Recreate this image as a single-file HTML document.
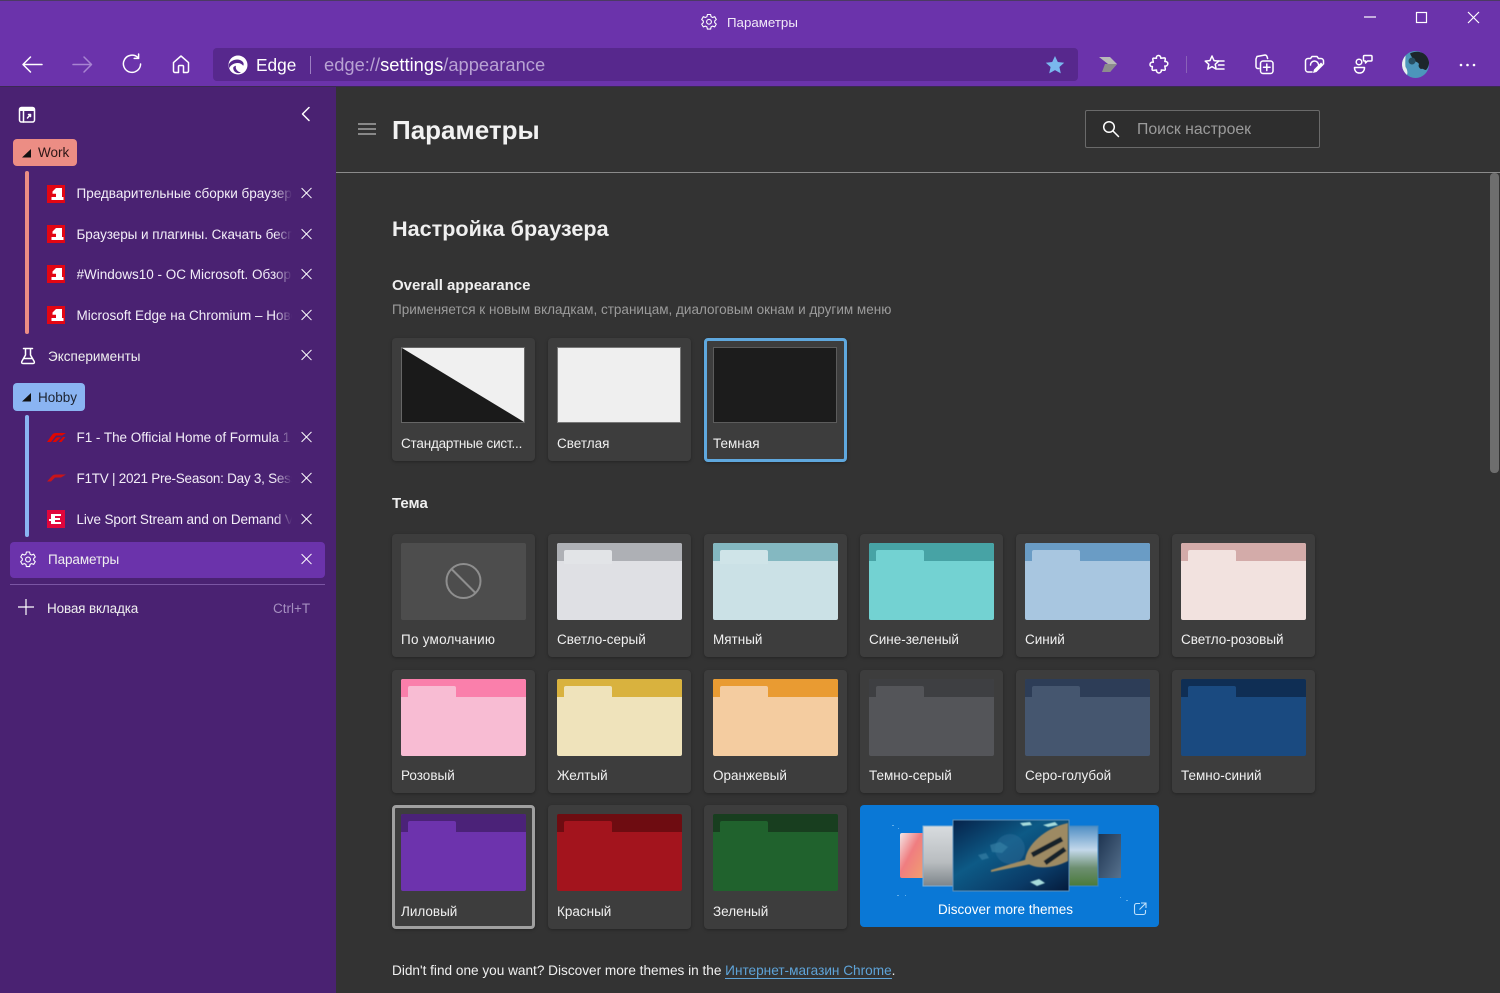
<!DOCTYPE html>
<html lang="ru"><head><meta charset="utf-8"><title>Параметры</title>
<style>
*{box-sizing:border-box}
html,body{margin:0;width:1500px;height:993px;overflow:hidden;background:#333;font-family:"Liberation Sans","Noto Sans CJK SC",sans-serif;color:#f0f0f0}
.a{position:absolute}
.t{position:absolute;white-space:nowrap;line-height:20px;font-size:13.5px}
svg{position:absolute;overflow:visible}
.s{fill:none;stroke:#fff;stroke-width:1.5;stroke-linecap:round;stroke-linejoin:round}
.tab{position:absolute;left:76.5px;width:215px;overflow:hidden;white-space:nowrap;line-height:20px;font-size:13.5px;color:#f3eef8;-webkit-mask-image:linear-gradient(90deg,#000 92%,transparent);mask-image:linear-gradient(90deg,#000 92%,transparent)}
.x{position:absolute;left:301px;width:12px;height:12px}
.x:before,.x:after{content:"";position:absolute;left:5px;top:-1px;width:1.3px;height:14px;background:#fff}
.x:before{transform:rotate(45deg)}.x:after{transform:rotate(-45deg)}
.c{position:absolute;width:143px;height:123px;background:#3d3d3d;border-radius:4px;box-shadow:0 1px 3px rgba(0,0,0,.3)}
.c .l{position:absolute;left:9px;top:96px;line-height:20px;font-size:13.5px;color:#f0f0f0;white-space:nowrap}
.f{position:absolute;left:9px;top:9px;width:124.5px;height:77px;border-radius:2px;overflow:hidden}
.f b{position:absolute;left:0;right:0;top:0;height:18px}
.f u{position:absolute;left:7px;top:7px;width:48px;height:14px;border-radius:2px 2px 0 0}
.p{position:absolute;left:9px;top:9px;width:124px;height:76px;border:1px solid #5c5c5c}
</style></head><body>

<!-- title / toolbar -->
<div class="a" style="left:0;top:0;width:1500px;height:86px;background:#6b33ab;border-top:1px solid #4b3a63"></div>
<div class="a" style="left:0;top:86px;width:1500px;height:1px;background:#3b2a52"></div>
<svg style="left:700px;top:13px" width="18" height="18" viewBox="0 0 18 18"><path class="s" style="stroke-width:1.1" d="M7.4 1.5h3.2l.5 2.2 1.5.8 2.1-.8 1.600 2.800-1.600 1.500v1.600l1.600 1.500-1.600 2.800-2.100-.8-1.500.8-.5 2.200H7.400l-.5-2.200-1.500-.8-2.100.8-1.600-2.800 1.600-1.500V8l-1.600-1.500 1.600-2.800 2.100.8 1.500-.8z"/><circle class="s" style="stroke-width:1.1" cx="9" cy="8.800" r="2.400"/></svg>
<div class="t" style="left:727px;top:13px;font-size:13.300px;color:#f1e9f8">Параметры</div>

<svg style="left:1364px;top:10px" width="120" height="16" viewBox="0 0 120 16"><path d="M0 7h12" stroke="#fff" stroke-width="1.2"/><rect x="52.500" y="2.500" width="10" height="10" fill="none" stroke="#fff" stroke-width="1.2"/><path d="M104 2l11 11M115 2l-11 11" stroke="#fff" stroke-width="1.2"/></svg>

<svg style="left:20px;top:52px" width="24" height="24" viewBox="0 0 24 24"><path class="s" d="M22 12.500H3M10.500 5l-7.500 7.500 7.500 7.500"/></svg>
<svg style="left:70px;top:52px" width="24" height="24" viewBox="0 0 24 24"><path class="s" style="stroke:#a884d2" d="M3 12.500h18M14 5l7.500 7.500-7.500 7.500"/></svg>
<svg style="left:120px;top:52px" width="24" height="24" viewBox="0 0 24 24"><path class="s" d="M18 5.600A8.600 8.600 0 1 0 20.600 12M18.600 2v4.400h-4.400"/></svg>
<svg style="left:170px;top:53px" width="22" height="22" viewBox="0 0 22 22"><path class="s" d="M11 3L3.500 9.600v8.400a1.500 1.500 0 0 0 1.500 1.500h3.500v-6a1 1 0 0 1 1-1h3a1 1 0 0 1 1 1v6H17a1.500 1.500 0 0 0 1.500-1.500V9.600z"/></svg>

<div class="a" style="left:213px;top:48px;width:865px;height:33px;background:#57288d;border-radius:4px"></div>
<svg style="left:228px;top:55px" width="20" height="20" viewBox="0 0 20 20"><circle cx="10" cy="10" r="9.500" fill="#fff"/><path d="M.8 9.500C2.500 5.500 8 3.500 12 5c3 1.200 4.500 3.500 3.200 5.800C14 9 12 8 9.500 8 6 8 2.500 10 1 13.500z" fill="#57288d"/><path d="M8 10.800c-1 3.200 1.500 6 5 6.800-3.800 1.600-8-.8-7.800-5 .5-1 1.500-1.600 2.800-1.800z" fill="#57288d"/></svg>
<div class="t" style="left:256px;top:54px;font-size:17.300px;line-height:22px;color:#fff">Edge</div>
<div class="a" style="left:310px;top:56px;width:1px;height:18px;background:#9d7fc2"></div>
<div class="t" style="left:324px;top:54px;font-size:18.330px;line-height:22px;color:#b8a2d3">edge://<span style="color:#fff">settings</span>/appearance</div>
<svg style="left:1045px;top:55px" width="20" height="20" viewBox="0 0 20 20"><path d="M10 1l2.800 6 6.400.7-4.800 4.300 1.400 6.400L10 15.100 4.200 18.400l1.400-6.400L.8 7.700 7.200 7z" fill="#7ab8ee"/></svg>

<svg style="left:1099px;top:56px" width="20" height="18" viewBox="0 0 20 18"><path d="M0 1h11l7 7-7 8H3l6-8z" fill="#b9b9b9"/><path d="M6 8h6l6 0-7 8H3z" fill="#8d8d8d"/></svg>
<svg style="left:1149px;top:54px" width="20" height="20" viewBox="0 0 20 20"><path class="s" d="M7.500 4.200C7 2.500 8.200 1.200 9.800 1.500c1.500.3 2 1.500 2 2.700l3.500-.3c.8 0 1.200.5 1 1.300l-.5 2.300c1.500-.3 3 .6 3 2.200s-1.500 2.700-3 2.300l.5 3c.1.800-.4 1.300-1.100 1.300l-2.900-.3c.3 1.500-.8 3-2.400 3s-2.700-1.500-2.400-3l-3.200.4c-.8.100-1.300-.4-1.200-1.200l.3-2.700C1.800 12.800.8 11.600 1 10.200c.2-1.400 1.500-2.300 3.300-2L3.800 5.300c-.1-.8.300-1.300 1.100-1.200z"/></svg>
<div class="a" style="left:1186px;top:56px;width:1px;height:17px;background:#8a62b8"></div>
<svg style="left:1204px;top:54px" width="22" height="20" viewBox="0 0 22 20"><path class="s" d="M8 2l2 4.600 4.800.5-3.600 3.200 1 4.800L8 12.600 3.800 15.100l1-4.800L1.200 7.100 6 6.600z"/><path class="s" d="M14 7h6M14.500 11h5.500M13.500 15h6.500"/></svg>
<svg style="left:1254px;top:54px" width="21" height="21" viewBox="0 0 21 21"><path class="s" d="M5 14.500H4a2 2 0 0 1-2-2V5l1-2.500 8-1.500c1 0 1.600.5 2 1.500l.6 2"/><rect class="s" x="6.500" y="7" width="12.500" height="12.500" rx="2.500"/><path class="s" d="M12.800 10v6.500M9.500 13.300H16"/></svg>
<svg style="left:1304px;top:54px" width="21" height="21" viewBox="0 0 21 21"><path class="s" d="M8 18H4a2.500 2.500 0 0 1-2.500-2.500V7A2.500 2.500 0 0 1 4 4.500h2.500L8 2.500h5l1.500 2H17A2.500 2.500 0 0 1 19.500 7v3"/><path class="s" d="M6.500 11a4 4 0 1 1 8 0"/><path d="M9 19l1-3.500 7-7 2.500 2.500-7 7z" fill="#fff"/></svg>
<svg style="left:1353px;top:54px" width="21" height="21" viewBox="0 0 21 21"><circle class="s" cx="6" cy="8" r="2.800"/><path class="s" d="M1.500 13.500h10c0 3.500-2 5.500-5 5.500s-5-2-5-5.500zM10.500 2.500c0-.6.500-1 1-1H18c.6 0 1 .4 1 1v3.500c0 .6-.4 1-1 1h-3.500L12.500 9V7h-1c-.6 0-1-.4-1-1z"/></svg>
<svg style="left:1402px;top:51px" width="27" height="27" viewBox="0 0 27 27"><circle cx="13.500" cy="13.500" r="13.500" fill="#4c96bb"/><path d="M3.500 4.500A13.500 13.500 0 0 0 5 24c1-3 0-6-1.500-8-.5-4 0-8 0-11.500z" fill="#e8eef0"/><path d="M8 2.500C14 -1 25 0 27 11c.2 3-1 6-3 8-2 0-3-2-5-1-2-1-3-3-2-5-2-3-5-2-6-5-1-2-2-3-3-5.500z" fill="#1d262b"/><circle cx="10" cy="10" r="3.500" fill="#274f63"/></svg>
<svg style="left:1459px;top:62px" width="18" height="6" viewBox="0 0 18 6"><circle cx="2" cy="3" r="1.300" fill="#fff"/><circle cx="8.500" cy="3" r="1.300" fill="#fff"/><circle cx="15" cy="3" r="1.300" fill="#fff"/></svg>

<!-- sidebar -->
<div class="a" style="left:0;top:87px;width:336px;height:906px;background:#4a2272"></div>
<svg style="left:18px;top:106px" width="18" height="18" viewBox="0 0 18 18"><rect class="s" x="1.500" y="1.500" width="15" height="14.500" rx="2"/><path d="M2 2h14v3H2z" fill="#fff"/><path class="s" d="M5.500 5v11M9.500 12l3-3.500M10.500 8.500h2v2"/></svg>
<svg style="left:300px;top:106px" width="12" height="16" viewBox="0 0 12 16"><path class="s" d="M9 1.500L2.500 8 9 14.500"/></svg>

<div class="a" style="left:13px;top:139px;width:64px;height:27px;background:#ec8d84;border-radius:4px"></div>
<svg style="left:21px;top:148px" width="11" height="10" viewBox="0 0 11 10"><path d="M1 9.500L10 1v8.500z" fill="#111"/></svg>
<div class="t" style="left:38px;top:143px;color:#2c1616">Work</div>
<div class="a" style="left:25px;top:171px;width:4px;height:163px;background:#ec8d84;border-radius:2px"></div>

<svg style="left:47px;top:185px" width="18" height="18" viewBox="0 0 18 18"><path d="M0 0h18v18H0z" fill="#e30613"/><path d="M9 3h6v9h1.500v3H4.500v-3H9V8.800H5.500V6.500z" fill="#fff"/></svg><div class="tab" style="top:184px">Предварительные сборки браузера Microsoft</div><div class="x" style="top:187px"></div>
<svg style="left:47px;top:225px" width="18" height="18" viewBox="0 0 18 18"><path d="M0 0h18v18H0z" fill="#e30613"/><path d="M9 3h6v9h1.500v3H4.500v-3H9V8.800H5.500V6.500z" fill="#fff"/></svg><div class="tab" style="top:225px;letter-spacing:-.05px">Браузеры и плагины. Скачать бесплатно</div><div class="x" style="top:228px"></div>
<svg style="left:47px;top:265px" width="18" height="18" viewBox="0 0 18 18"><path d="M0 0h18v18H0z" fill="#e30613"/><path d="M9 3h6v9h1.500v3H4.500v-3H9V8.800H5.500V6.500z" fill="#fff"/></svg><div class="tab" style="top:265px">#Windows10 - ОС Microsoft. Обзоры</div><div class="x" style="top:268px"></div>
<svg style="left:47px;top:306px" width="18" height="18" viewBox="0 0 18 18"><path d="M0 0h18v18H0z" fill="#e30613"/><path d="M9 3h6v9h1.500v3H4.500v-3H9V8.800H5.500V6.500z" fill="#fff"/></svg><div class="tab" style="top:306px">Microsoft Edge на Chromium – Новости</div><div class="x" style="top:309px"></div>

<svg style="left:20px;top:347px" width="16" height="18" viewBox="0 0 16 18"><path class="s" d="M3.500 1.500h9M5.500 1.500v6.500L1.800 14.500c-.6 1 0 2 1.200 2h10c1.200 0 1.800-1 1.200-2L10.500 8V1.500M3.800 11.500h8.400"/></svg>
<div class="t" style="left:48px;top:347px">Эксперименты</div><div class="x" style="top:349px"></div>

<div class="a" style="left:13px;top:383px;width:72px;height:28px;background:#8ab4f2;border-radius:4px"></div>
<svg style="left:21px;top:392px" width="11" height="10" viewBox="0 0 11 10"><path d="M1 9.500L10 1v8.500z" fill="#111"/></svg>
<div class="t" style="left:38px;top:388px;color:#1c2330">Hobby</div>
<div class="a" style="left:25px;top:415px;width:4px;height:122px;background:#8ab4f2;border-radius:2px"></div>

<svg style="left:46px;top:432px" width="20" height="11" viewBox="0 0 20 11"><path d="M1 10L6 3c1-1.500 2-2 4-2h10l-4 2.500h-6L5 10zM6.500 10l3.500-4c.5-.5 1-.8 2-.8h3L10 10zM12.500 10L17 5h2.500l-4 5z" fill="#e10600"/></svg>
<div class="tab" style="top:428px;letter-spacing:-.03px">F1 - The Official Home of Formula 1 Racing</div><div class="x" style="top:431px"></div>
<svg style="left:46px;top:474px" width="20" height="8" viewBox="0 0 20 8"><path d="M1 7.500L6 2c1-1 2-1.500 4-1.500h10L15 3.500H9L5 7.500z" fill="#c8141a"/></svg>
<div class="tab" style="top:469px;letter-spacing:-.25px">F1TV | 2021 Pre-Season: Day 3, Session</div><div class="x" style="top:472px"></div>
<div class="a" style="left:47px;top:510px;width:18px;height:18px;background:#e0063c"></div>
<svg style="left:47px;top:510px" width="18" height="18" viewBox="0 0 18 18"><path d="M4 4h10v2H8v2h5v2H8v2h6v2H4v-3H2V9h2z" fill="#fff"/></svg>
<div class="tab" style="top:510px;letter-spacing:-.1px">Live Sport Stream and on Demand Video</div><div class="x" style="top:513px"></div>

<div class="a" style="left:10px;top:542px;width:315px;height:36px;background:#6b33ab;border-radius:4px"></div>
<svg style="left:19px;top:551px" width="18" height="18" viewBox="0 0 18 18"><path class="s" style="stroke-width:1.1" d="M7.400 1h3.200l.5 2.200 1.500.8 2.100-.8 1.600 2.800-1.600 1.500v1.600l1.600 1.500-1.600 2.800-2.100-.8-1.500.8-.5 2.200H7.400l-.5-2.200-1.500-.8-2.100.8-1.600-2.800 1.600-1.500V7.500L1.700 6l1.600-2.800 2.100.8 1.500-.8z"/><circle class="s" style="stroke-width:1.1" cx="9" cy="8.500" r="2.400"/></svg>
<div class="t" style="left:48px;top:550px;letter-spacing:-.1px">Параметры</div><div class="x" style="top:553px"></div>
<div class="a" style="left:10px;top:584px;width:315px;height:1px;background:#7a55a3"></div>
<svg style="left:18px;top:599px" width="16" height="16" viewBox="0 0 16 16"><path d="M8 0v16M0 8h16" stroke="#fff" stroke-width="1.2"/></svg>
<div class="t" style="left:47px;top:599px;letter-spacing:-.15px">Новая вкладка</div>
<div class="t" style="left:273px;top:599px;color:#a58fc0">Ctrl+T</div>

<!-- main -->
<svg style="left:358px;top:123px" width="18" height="12" viewBox="0 0 18 12"><path d="M0 1h18M0 6h18M0 11h18" stroke="#ddd" stroke-width="1.100"/></svg>
<div class="t" style="left:392px;top:113px;font-size:26px;line-height:34px;font-weight:bold;color:#f2f2f2">Параметры</div>
<div class="a" style="left:1085px;top:110px;width:235px;height:38px;border:1px solid #6a6a6a;background:#2e2e2e;border-radius:2px"></div>
<svg style="left:1102px;top:120px" width="18" height="18" viewBox="0 0 18 18"><circle class="s" cx="7" cy="7" r="5.300"/><path class="s" d="M11 11l5.500 5.500"/></svg>
<div class="t" style="left:1137px;top:120px;font-size:15.800px;color:#9b9b9b">Поиск настроек</div>
<div class="a" style="left:336px;top:172px;width:1164px;height:1px;background:#8b8b8b"></div>
<div class="a" style="left:1490px;top:173px;width:9px;height:300px;background:#6e6e6e;border-radius:4px"></div>

<div class="t" style="left:392px;top:214px;font-size:21.600px;line-height:30px;font-weight:bold;color:#f0f0f0">Настройка браузера</div>
<div class="t" style="left:392px;top:276px;font-size:15px;font-weight:bold;color:#efefef">Overall appearance</div>
<div class="t" style="left:392px;top:300px;font-size:13.530px;color:#9c9c9c">Применяется к новым вкладкам, страницам, диалоговым окнам и другим меню</div>

<div class="c" style="left:392px;top:338px"><div class="p" style="background:#f0f0f0;border-color:#666"></div><svg style="left:10px;top:10px" width="122" height="74"><path d="M0 0L122 74H0z" fill="#1a1a1a"/></svg><div class="l" style="letter-spacing:-.2px">Стандартные сист...</div></div>
<div class="c" style="left:548px;top:338px"><div class="p" style="background:#efefef;border-color:#777"></div><div class="l">Светлая</div></div>
<div class="c" style="left:704px;top:338px;border:3px solid #5fa8de;height:124px"><div class="p" style="left:6px;top:6px;background:#1c1c1c"></div><div class="l" style="left:6px;top:93px">Темная</div></div>

<div class="t" style="left:392px;top:494px;font-size:15px;font-weight:bold;color:#efefef">Тема</div>

<!-- row 1 -->
<div class="c" style="left:392px;top:534px"><div class="f" style="background:#4d4d4d"></div><svg style="left:52px;top:28px" width="40" height="40" viewBox="0 0 40 40"><circle cx="19.500" cy="19" r="17" fill="none" stroke="#8e8e8e" stroke-width="2"/><path d="M7.500 7l24 24" stroke="#8e8e8e" stroke-width="2"/></svg><div class="l" style="letter-spacing:.25px">По умолчанию</div></div>
<div class="c" style="left:548px;top:534px"><div class="f" style="background:#dfe0e4"><b style="background:#aeb0b5"></b><u style="background:#e2e4e7"></u></div><div class="l">Светло-серый</div></div>
<div class="c" style="left:704px;top:534px"><div class="f" style="background:#cbe1e6"><b style="background:#84b8c1"></b><u style="background:#cfe4e8"></u></div><div class="l">Мятный</div></div>
<div class="c" style="left:860px;top:534px"><div class="f" style="background:#73d2d2"><b style="background:#47a3a5"></b><u style="background:#73d2d2"></u></div><div class="l">Сине-зеленый</div></div>
<div class="c" style="left:1016px;top:534px"><div class="f" style="background:#a8c6e0"><b style="background:#6a9cc5"></b><u style="background:#a8c6e0"></u></div><div class="l">Синий</div></div>
<div class="c" style="left:1172px;top:534px"><div class="f" style="background:#f2e2df"><b style="background:#d3aba9"></b><u style="background:#f2e2df"></u></div><div class="l">Светло-розовый</div></div>
<!-- row 2 -->
<div class="c" style="left:392px;top:670px"><div class="f" style="background:#f8bcd3"><b style="background:#fa7fab"></b><u style="background:#f8bcd3"></u></div><div class="l">Розовый</div></div>
<div class="c" style="left:548px;top:670px"><div class="f" style="background:#efe3bb"><b style="background:#d9b23e"></b><u style="background:#efe3bb"></u></div><div class="l">Желтый</div></div>
<div class="c" style="left:704px;top:670px"><div class="f" style="background:#f4cca0"><b style="background:#e99b32"></b><u style="background:#f4cca0"></u></div><div class="l">Оранжевый</div></div>
<div class="c" style="left:860px;top:670px"><div class="f" style="background:#545559"><b style="background:#3e3f42"></b><u style="background:#545559"></u></div><div class="l">Темно-серый</div></div>
<div class="c" style="left:1016px;top:670px"><div class="f" style="background:#45566f"><b style="background:#2d3d57"></b><u style="background:#45566f"></u></div><div class="l">Серо-голубой</div></div>
<div class="c" style="left:1172px;top:670px"><div class="f" style="background:#1a4a80"><b style="background:#0f2e54"></b><u style="background:#1a4a80"></u></div><div class="l">Темно-синий</div></div>
<!-- row 3 -->
<div class="c" style="left:392px;top:805px;height:124px;border:3px solid #a0a0a0"><div class="f" style="left:6px;top:6px;background:#6d33ad"><b style="background:#4b2278"></b><u style="background:#6d33ad"></u></div><div class="l" style="left:6px;top:94px">Лиловый</div></div>
<div class="c" style="left:548px;top:805px;height:124px"><div class="f" style="background:#a3141d"><b style="background:#6e0c11"></b><u style="background:#a3141d"></u></div><div class="l" style="top:97px">Красный</div></div>
<div class="c" style="left:704px;top:805px;height:124px"><div class="f" style="background:#20622d"><b style="background:#183e1f"></b><u style="background:#20622d"></u></div><div class="l" style="top:97px">Зеленый</div></div>

<div class="a" style="left:860px;top:805px;width:299px;height:122px;background:#0a78d6;border-radius:4px"></div>
<svg style="left:860px;top:805px" width="299" height="122" viewBox="0 0 299 122">
<defs>
<linearGradient id="g1" x1="0" y1="0" x2="1" y2="1"><stop offset="0" stop-color="#f3e6e6"/><stop offset=".45" stop-color="#f07d80"/><stop offset="1" stop-color="#f0a070"/></linearGradient>
<linearGradient id="g2" x1="0" y1="0" x2="0" y2="1"><stop offset="0" stop-color="#d8dcdf"/><stop offset=".6" stop-color="#b9bdc0"/><stop offset="1" stop-color="#7d858a"/></linearGradient>
<linearGradient id="g3" x1="0" y1="0" x2="1" y2="1"><stop offset="0" stop-color="#06224a"/><stop offset=".4" stop-color="#0d5a86"/><stop offset=".75" stop-color="#0a3a66"/><stop offset="1" stop-color="#041a3a"/></linearGradient>
<linearGradient id="g4" x1="0" y1="0" x2="0" y2="1"><stop offset="0" stop-color="#4f8ec4"/><stop offset=".4" stop-color="#c3d8ea"/><stop offset=".7" stop-color="#6d8f70"/><stop offset="1" stop-color="#4a7a3a"/></linearGradient>
<linearGradient id="g5" x1="0" y1="0" x2="1" y2="1"><stop offset="0" stop-color="#1d3350"/><stop offset="1" stop-color="#57728e"/></linearGradient>
<filter id="bl"><feGaussianBlur stdDeviation=".6"/></filter>
</defs>
<rect x="40" y="28" width="24" height="45" rx="2" fill="url(#g1)"/>
<rect x="63" y="21" width="30" height="60" fill="url(#g2)" stroke="#7fb0d8" stroke-width="1"/>
<rect x="238" y="29" width="23" height="44" fill="url(#g5)"/>
<rect x="209" y="21" width="29" height="60" fill="url(#g4)" stroke="#3f88c4" stroke-width="1"/>
<rect x="93" y="15" width="116" height="71" fill="url(#g3)" stroke="#5d8fb8" stroke-width="1"/>
<g filter="url(#bl)">
<path d="M165 56c1-16 20-33 43-38v38c-18 9-36 8-43 0z" fill="#9d8a63"/>
<path d="M168 54l-37 11 0 2 40-8z" fill="#a08c62"/>
<path d="M172 50l30-16M185 58l20-14" stroke="#16222c" stroke-width="5"/>
<circle cx="150" cy="44" r="15" fill="#2b6f9a" opacity=".45"/>
<path d="M170 77l9-3 6 4-8 3zM183 20l12-3 3 3-10 2zM160 18l10-1 2 3-9 1z" fill="#a7dcdc"/>
<path d="M130 40l10-3 8 5-6 6-10-1zM118 50l8-2 3 5-7 2z" fill="#3b84a8" opacity=".6"/>
</g>
<path d="M32 20h2v1h-2zM38 23h1v1h-1zM37 90h2v1h-2zM45 90h1v1h-1zM260 92h1v1h-1zM266 95h2v1h-2z" fill="#5fadea"/>
</svg>
<div class="t" style="left:938px;top:900px;font-size:13.500px;color:#fff">Discover more themes</div>
<svg style="left:1133px;top:902px" width="14" height="14" viewBox="0 0 14 14"><path d="M7 1.500H3.500a2 2 0 0 0-2 2v7a2 2 0 0 0 2 2h7a2 2 0 0 0 2-2V8M8 1h5v5M13 1L6.500 7.500" fill="none" stroke="#bfe0fa" stroke-width="1.100"/></svg>

<div class="t" style="left:392px;top:961px;font-size:13.620px;color:#f0f0f0">Didn't find one you want? Discover more themes in the <span style="color:#5ea3d8;border-bottom:1px solid #5ea3d8">Интернет-магазин Chrome</span>.</div>
</body></html>
